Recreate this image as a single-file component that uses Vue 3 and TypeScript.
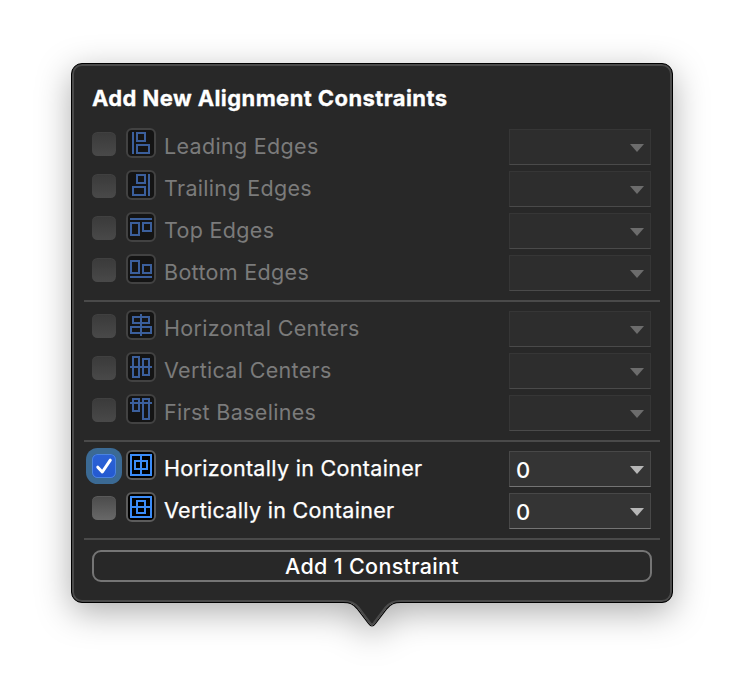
<script setup lang="ts">
import { ref, computed } from 'vue'

interface Row {
  id: string
  label: string
  glyph: string
  enabled: boolean
  checked: boolean
  value: string
}

const row = (id: string, label: string, glyph: string, enabled = false, checked = false): Row => ({
  id, label, glyph, enabled, checked, value: enabled ? '0' : '',
})

const groups = ref<Row[][]>([
  [
    row('leading', 'Leading Edges', 'M7 4V26M11 5H19V13H11ZM11 17H23V25H11Z'),
    row('trailing', 'Trailing Edges', 'M23 4V26M11 5H19V13H11ZM7 17H19V25H7Z'),
    row('top', 'Top Edges', 'M4 7H26M5 11H13V23H5ZM17 11H25V19H17Z'),
    row('bottom', 'Bottom Edges', 'M4 23H26M5 7H13V19H5ZM17 11H25V19H17Z'),
  ],
  [
    row('hcenters', 'Horizontal Centers', 'M15 4V26M7 7H23V13H7ZM5 17H25V23H5Z'),
    row('vcenters', 'Vertical Centers', 'M4 15H26M7 5H13V25H7ZM17 7H23V23H17Z'),
    row('baselines', 'First Baselines', 'M4 9H26M7 5H13V17H7ZM17 5H23V25H17Z'),
  ],
  [
    row('hcontainer', 'Horizontally in Container', 'M5 5H25V25H5ZM15 5V25M9 11H21V19H9Z', true, true),
    row('vcontainer', 'Vertically in Container', 'M5 5H25V25H5ZM5 15H25M11 9H19V21H11Z', true),
  ],
])

const count = computed(() => groups.value.flat().filter((r) => r.checked).length)

function toggle(r: Row) {
  if (r.enabled) r.checked = !r.checked
}
</script>

<template>
  <main class="stage">
    <section class="popover">
      <h1 class="title">Add New Alignment Constraints</h1>
      <div v-for="(group, i) in groups" :key="i" class="group">
        <div v-for="r in group" :key="r.id" class="row" :class="[r.id, { disabled: !r.enabled }]">
          <button class="check" :class="{ on: r.checked }" role="checkbox" :aria-checked="r.checked" @click="toggle(r)">
            <svg v-if="r.checked" width="24" height="24" viewBox="0 0 24 24">
              <path d="M5.8 13.2L10.3 18L18.3 6.2" />
            </svg>
          </button>
          <svg class="icon" width="30" height="30" viewBox="0 0 30 30">
            <rect class="frame" x="1" y="1" width="28" height="28" rx="5" />
            <path class="glyph" :d="r.glyph" />
          </svg>
          <span class="label">{{ r.label }}</span>
          <div class="combo">
            <span class="value">{{ r.value }}</span>
            <svg width="14" height="8" viewBox="0 0 14 8"><path d="M0 0H14L7 8Z" /></svg>
          </div>
        </div>
      </div>
      <button class="add">Add {{ count }} Constraint</button>
      <svg class="tail" width="66" height="31" viewBox="0 0 66 31">
        <path class="fill" d="M0 0H66V3H63C55 3 51.5 5 47.5 9.5L36.5 24.5Q33 29 29.5 24.5L18.5 9.5C14.5 5 11 3 3 3H0Z" />
        <path class="outer" d="M0 4.500H4C11 4.500 14 6 18 10.500L29.500 25.500Q33 30.500 36.500 25.500L48 10.500C52 6 55 4.500 62 4.500H66" />
        <path class="inner" d="M0 3H4C12 3 15.500 5 19.500 9.500L30.500 24Q33 28.500 35.500 24L46.500 9.500C50.500 5 54 3 62 3H66" />
      </svg>
    </section>
  </main>
</template>

<style>
body {
  background: #fff;
}
</style>

<style scoped>
.stage {
  width: 744px;
  height: 682px;
  box-sizing: border-box;
  padding: 63px 71px;
  overflow: hidden;
  font-family: Inter, "Liberation Sans", sans-serif;
}
.popover {
  position: relative;
  box-sizing: border-box;
  width: 602px;
  height: 540px;
  padding: 18px 10px 0;
  border: 1px solid #000;
  border-radius: 11px;
  background: #282828;
  box-shadow: inset 0 0 0 2px #4a4a4a;
  filter: drop-shadow(0 9px 17px rgba(0, 0, 0, 0.32));
}
.title {
  margin: 0 0 0 10px;
  height: 46px;
  line-height: 32px;
  font-size: 22px;
  font-weight: 700;
  letter-spacing: 0.41px;
  color: #fff;
  -webkit-text-stroke: 0.3px #fff;
  white-space: nowrap;
}
.group {
  margin: 0 2px 8px;
  padding-bottom: 4px;
  border-bottom: 2px solid #4a4a4a;
}
.row {
  display: flex;
  height: 42px;
  padding: 0 9px 0 8px;
  align-items: flex-start;
}
.check {
  width: 24px;
  height: 24px;
  margin: 4px 10px 0 0;
  padding: 0;
  border: 0;
  border-radius: 5.5px;
  background: linear-gradient(#4b4b4b, #686868);
  box-shadow: inset 0 1px 0 rgba(255, 255, 255, 0.08);
}
.disabled .check {
  background: linear-gradient(#3a3a3a, #494949);
  box-shadow: inset 0 1px 0 rgba(255, 255, 255, 0.03);
}
.check.on {
  background: linear-gradient(#2b62d6, #2459d0);
  box-shadow: inset 0 0 0 1px #4a83e0, 0 0 0 6px #3b6a94;
}
.check svg {
  display: block;
  fill: none;
  stroke: #fff;
  stroke-width: 3;
  stroke-linecap: round;
  stroke-linejoin: round;
}
.icon {
  flex: none;
}
.frame {
  fill: #000;
  stroke: #5c5c5c;
  stroke-width: 2;
}
.glyph {
  fill: none;
  stroke: #3b8cf8;
  stroke-width: 2;
}
.disabled .frame {
  fill: #141414;
  stroke: #424242;
}
.disabled .glyph {
  stroke: #3b5f9c;
}
.label {
  flex: 1;
  margin-left: 8px;
  line-height: 36px;
  font-size: 21.5px;
  letter-spacing: 0.32px;
  color: #fff;
  -webkit-text-stroke: 0.25px #fff;
  white-space: nowrap;
}
.disabled .label {
  color: #7b7b7b;
  -webkit-text-stroke: 0;
}
.combo {
  box-sizing: border-box;
  display: flex;
  justify-content: space-between;
  width: 142px;
  height: 36px;
  margin-top: 1px;
  padding: 0 6px;
  border: 1px solid #484848;
  border-bottom-color: #747474;
  background: #343434;
  color: #fff;
  font-size: 22px;
  font-weight: 500;
  line-height: 36px;
}
.combo svg {
  margin-top: 14px;
  fill: #b6b6b6;
}
.disabled .combo {
  border-color: #363636;
  border-bottom-color: #4a4a4a;
  background: #2d2d2d;
}
.disabled .combo svg {
  fill: #6c6c6c;
}
.add {
  display: block;
  box-sizing: border-box;
  width: 560px;
  height: 32px;
  margin: 10px 0 0 10px;
  padding: 0;
  border: 2px solid #757575;
  border-radius: 9px;
  background: transparent;
  color: #fff;
  font: 500 21.5px/28px Inter, "Liberation Sans", sans-serif;
  letter-spacing: 0.33px;
}
.tail {
  position: absolute;
  left: 267px;
  top: 534px;
}
.tail .fill {
  fill: #282828;
}
.tail .outer {
  fill: none;
  stroke: #000;
  stroke-width: 1.2;
}
.tail .inner {
  fill: none;
  stroke: #4a4a4a;
  stroke-width: 2;
}
</style>
